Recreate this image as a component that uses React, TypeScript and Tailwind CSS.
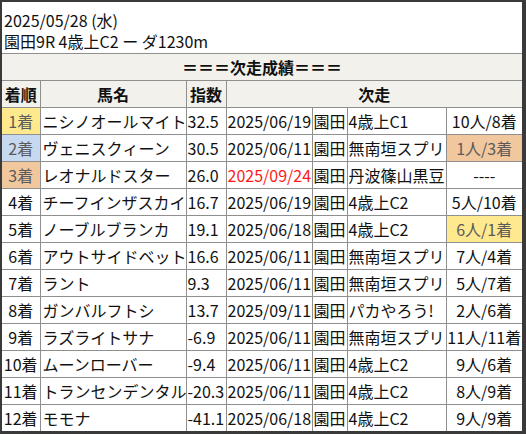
import React from "react";

type Row = {
  rank: string;
  rankBg?: string;
  name: string;
  index: string;
  date: string;
  dateRed?: boolean;
  place: string;
  race: string;
  result: string;
  resultBg?: string;
};

const rows: Row[] = [
  { rank: "1着", rankBg: "bg-[#ffe98f]", name: "ニシノオールマイト", index: "32.5", date: "2025/06/19", place: "園田", race: "4歳上C1", result: "10人/8着" },
  { rank: "2着", rankBg: "bg-[#c6d9f0]", name: "ヴェニスクィーン", index: "30.5", date: "2025/06/11", place: "園田", race: "無南垣スプリ", result: "1人/3着", resultBg: "bg-[#f1c79e]" },
  { rank: "3着", rankBg: "bg-[#f1c79e]", name: "レオナルドスター", index: "26.0", date: "2025/09/24", dateRed: true, place: "園田", race: "丹波篠山黒豆", result: "----" },
  { rank: "4着", name: "チーフインザスカイ", index: "16.7", date: "2025/06/19", place: "園田", race: "4歳上C2", result: "5人/10着" },
  { rank: "5着", name: "ノーブルブランカ", index: "19.1", date: "2025/06/18", place: "園田", race: "4歳上C2", result: "6人/1着", resultBg: "bg-[#ffe98f]" },
  { rank: "6着", name: "アウトサイドベット", index: "16.6", date: "2025/06/11", place: "園田", race: "無南垣スプリ", result: "7人/4着" },
  { rank: "7着", name: "ラント", index: "9.3", date: "2025/06/11", place: "園田", race: "無南垣スプリ", result: "5人/7着" },
  { rank: "8着", name: "ガンバルフトシ", index: "13.7", date: "2025/09/11", place: "園田", race: "パカやろう!", result: "2人/6着" },
  { rank: "9着", name: "ラズライトサナ", index: "-6.9", date: "2025/06/11", place: "園田", race: "無南垣スプリ", result: "11人/11着" },
  { rank: "10着", name: "ムーンローバー", index: "-9.4", date: "2025/06/11", place: "園田", race: "4歳上C2", result: "9人/6着" },
  { rank: "11着", name: "トランセンデンタル", index: "-20.3", date: "2025/06/11", place: "園田", race: "4歳上C2", result: "8人/9着" },
  { rank: "12着", name: "モモナ", index: "-41.1", date: "2025/06/18", place: "園田", race: "4歳上C2", result: "9人/9着" },
];

const cell = "border border-[#8f8f8f] h-[26px] p-0 whitespace-nowrap overflow-hidden";

export default function App() {
  return (
    <div
      className="w-[526px] h-[434px] overflow-hidden bg-white border-t-2 border-l-2 border-r-4 border-b-[3px] border-[#3a3a3a] text-[16px] leading-[26px] text-[#111]"
      style={{ fontFamily: '"Noto Sans CJK JP", "Noto Sans", sans-serif' }}
    >
      <div className="h-[51px] pt-[8px] pl-[2px] leading-[21px]">
        <div>2025/05/28 (水)</div>
        <div>園田9R 4歳上C2 ー ダ1230m</div>
      </div>
      <table className="border-collapse table-fixed w-[520px]">
        <colgroup>
          <col className="w-[38px]" />
          <col className="w-[146px]" />
          <col className="w-[40px]" />
          <col className="w-[86px]" />
          <col className="w-[35px]" />
          <col className="w-[99px]" />
          <col className="w-[76px]" />
        </colgroup>
        <tbody>
          <tr className="bg-[#f2f1ec] font-bold">
            <td colSpan={7} className={`${cell} text-center border-l-0 border-r-0`}>
              ＝＝＝次走成績＝＝＝
            </td>
          </tr>
          <tr className="bg-[#f2f1ec] font-bold">
            <td className={`${cell} text-center border-l-0`}>着順</td>
            <td className={`${cell} text-center`}>馬名</td>
            <td className={`${cell} text-center`}>指数</td>
            <td colSpan={4} className={`${cell} text-center border-r-0`}>次走</td>
          </tr>
          {rows.map((r) => (
            <tr key={r.rank}>
              <td className={`${cell} text-center border-l-0 ${r.rankBg ? `${r.rankBg} text-[#5a5a5a]` : ""}`}>{r.rank}</td>
              <td className={`${cell} pl-[2px]`}>{r.name}</td>
              <td className={`${cell} pl-[1px]`}>{r.index}</td>
              <td className={`${cell} pl-[1px] ${r.dateRed ? "text-[#ff1a1a]" : ""}`}>{r.date}</td>
              <td className={`${cell} pl-[1px]`}>{r.place}</td>
              <td className={`${cell} pl-[1px]`}>{r.race}</td>
              <td className={`${cell} text-center border-r-0 ${r.resultBg ? `${r.resultBg} text-[#5a5a5a]` : ""}`}>{r.result}</td>
            </tr>
          ))}
        </tbody>
      </table>
    </div>
  );
}
